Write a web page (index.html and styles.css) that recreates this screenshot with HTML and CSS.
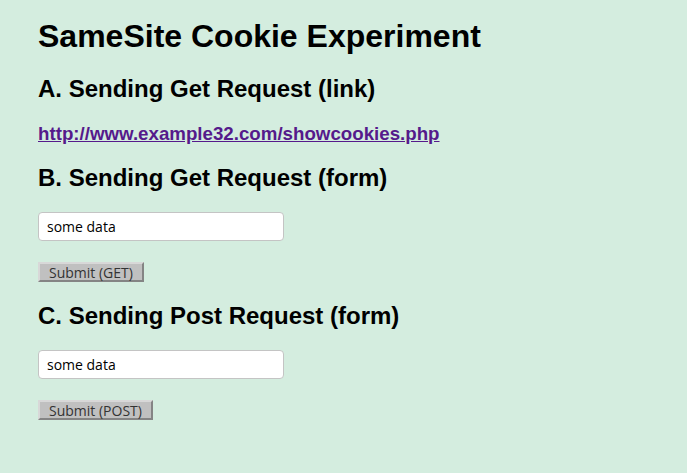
FILE: index.html
```html
<!DOCTYPE html>
<html>
<head>
<meta charset="utf-8">
<link rel="stylesheet" href="styles.css">
</head>
<body>
<main class="page">
  <h1 class="title">SameSite Cookie Experiment</h1>
  <h2 class="section">A. Sending Get Request (link)</h2>
  <a class="link" href="#">http://www.example32.com/showcookies.php</a>
  <h2 class="section">B. Sending Get Request (form)</h2>
  <form class="form">
    <input class="field" type="text" value="some data">
    <button class="btn" type="button">Submit (GET)</button>
  </form>
  <h2 class="section">C. Sending Post Request (form)</h2>
  <form class="form">
    <input class="field" type="text" value="some data">
    <button class="btn" type="button">Submit (POST)</button>
  </form>
</main>
</body>
</html>
```
FILE: styles.css
```css
html, body {
  margin: 0;
  padding: 0;
  background: #d4eddf;
}
body {
  font-family: "Liberation Sans", Arial, sans-serif;
  color: #000;
}
.page {
  display: flex;
  flex-direction: column;
  align-items: flex-start;
  gap: 20px;
  padding: 18px 0 0 38px;
}
.title {
  margin: 0;
  font-size: 32px;
  font-weight: bold;
  line-height: 37px;
}
.section {
  margin: 0;
  font-size: 24px;
  font-weight: bold;
  line-height: 28px;
}
.link {
  font-size: 18.72px;
  font-weight: bold;
  line-height: 21px;
  color: #551a8b;
  text-decoration: underline;
}
.form {
  display: flex;
  flex-direction: column;
  align-items: flex-start;
  gap: 21px;
  margin: 0;
}
.field {
  box-sizing: border-box;
  width: 246px;
  height: 29px;
  margin: 0;
  padding: 0 8px;
  border: 1px solid #c4c4c4;
  border-radius: 4px;
  background: #fff;
  font-family: "Open Sans", "DejaVu Sans", sans-serif;
  font-size: 14px;
  color: #000;
}
.btn {
  box-sizing: border-box;
  height: 20px;
  margin: 0;
  padding: 0 9px;
  background: #c0c0c0;
  border: 2px outset #d8d8d8;
  border-radius: 0;
  font-family: "Open Sans", "DejaVu Sans", sans-serif;
  font-size: 14px;
  line-height: 15px;
  color: #333;
}
```
